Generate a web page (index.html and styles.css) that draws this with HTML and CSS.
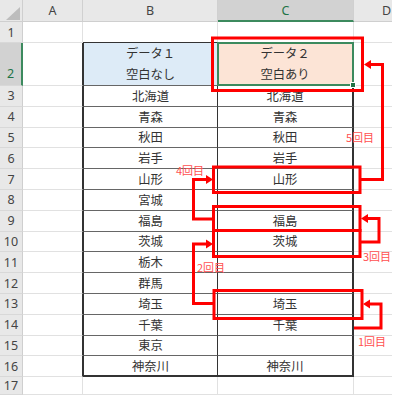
FILE: index.html
```html
<!DOCTYPE html>
<html lang="ja">
<head>
<meta charset="utf-8">
<title>Sheet</title>
<link rel="stylesheet" href="styles.css">
</head>
<body>
<div class="sheet">
  <div class="corner"><svg width="23" height="22" viewBox="0 0 23 22"><polygon points="20,7 20,20 6,20" fill="#BDBDBD"/></svg></div>
  <div class="ch">A</div><div class="ch">B</div><div class="ch chsel">C</div><div class="ch chd">D</div><div class="x"></div>

  <div class="rh">1</div><div class="c"></div><div class="c top"></div><div class="c top"></div><div class="c d"></div><div class="x"></div>

  <div class="rh rhsel">2</div><div class="c ta"></div><div class="c t tb h1">データ１<br>空白なし</div><div class="c t tc h2 selc">データ２<br>空白あり</div><div class="c d"></div><div class="x"></div>

  <div class="rh">3</div><div class="c ta"></div><div class="c t tb">北海道</div><div class="c t tc">北海道</div><div class="c d"></div><div class="x"></div>
  <div class="rh">4</div><div class="c ta"></div><div class="c t tb">青森</div><div class="c t tc">青森</div><div class="c d"></div><div class="x"></div>
  <div class="rh">5</div><div class="c ta"></div><div class="c t tb">秋田</div><div class="c t tc">秋田</div><div class="c d"></div><div class="x"></div>
  <div class="rh">6</div><div class="c ta"></div><div class="c t tb">岩手</div><div class="c t tc">岩手</div><div class="c d"></div><div class="x"></div>
  <div class="rh">7</div><div class="c ta"></div><div class="c t tb">山形</div><div class="c t tc">山形</div><div class="c d"></div><div class="x"></div>
  <div class="rh">8</div><div class="c ta"></div><div class="c t tb">宮城</div><div class="c t tc"></div><div class="c d"></div><div class="x"></div>
  <div class="rh">9</div><div class="c ta"></div><div class="c t tb">福島</div><div class="c t tc">福島</div><div class="c d"></div><div class="x"></div>
  <div class="rh">10</div><div class="c ta"></div><div class="c t tb">茨城</div><div class="c t tc">茨城</div><div class="c d"></div><div class="x"></div>
  <div class="rh">11</div><div class="c ta"></div><div class="c t tb">栃木</div><div class="c t tc"></div><div class="c d"></div><div class="x"></div>
  <div class="rh">12</div><div class="c ta"></div><div class="c t tb">群馬</div><div class="c t tc"></div><div class="c d"></div><div class="x"></div>
  <div class="rh">13</div><div class="c ta"></div><div class="c t tb">埼玉</div><div class="c t tc">埼玉</div><div class="c d"></div><div class="x"></div>
  <div class="rh">14</div><div class="c ta"></div><div class="c t tb">千葉</div><div class="c t tc">千葉</div><div class="c d"></div><div class="x"></div>
  <div class="rh">15</div><div class="c ta"></div><div class="c t tb">東京</div><div class="c t tc"></div><div class="c d"></div><div class="x"></div>
  <div class="rh">16</div><div class="c ta"></div><div class="c t tb tl">神奈川</div><div class="c t tc tl">神奈川</div><div class="c d"></div><div class="x"></div>

  <div class="rh">17</div><div class="c"></div><div class="c"></div><div class="c"></div><div class="c d"></div><div class="x"></div>
</div>

<svg class="overlay" width="418" height="395" viewBox="0 0 418 395">
  <g fill="none" stroke="#FF0000" stroke-width="3" stroke-linejoin="miter">
    <rect x="212.5" y="38" width="150" height="52.5"/>
    <rect x="213.5" y="167" width="146.5" height="25.5"/>
    <rect x="213.5" y="206.5" width="146.5" height="24"/>
    <rect x="213.5" y="230.5" width="146.5" height="26"/>
    <rect x="214" y="290.5" width="148" height="28"/>
    <path d="M354 328 H381 V304 H368"/>
    <path d="M361 179.5 H382.5 V64.5 H369"/>
    <path d="M360 242 H379 V218.5 H366"/>
    <path d="M213 219 H193.5 V179.5 H207"/>
    <path d="M214 303.5 H193.5 V244 H207"/>
  </g>
  <g fill="#FF0000">
    <polygon points="363,304 370,299.5 370,308.5"/>
    <polygon points="364,64.5 371,60 371,69"/>
    <polygon points="361,218.5 368,214 368,223"/>
    <polygon points="213,179.5 206,175 206,184"/>
    <polygon points="213,244 206,239.5 206,248.5"/>
  </g>
</svg>
<span class="lbl l1">1回目</span>
<span class="lbl l2">2回目</span>
<span class="lbl l3">3回目</span>
<span class="lbl l4">4回目</span>
<span class="lbl l5">5回目</span>
</body>
</html>
```
FILE: styles.css
```css
html, body {
  margin: 0;
  padding: 0;
  background: #ffffff;
}
body {
  position: relative;
  width: 418px;
  height: 395px;
  overflow: hidden;
}
.sheet {
  display: grid;
  grid-template-columns: 23px 60px 135px 136px 38px 1fr;
  grid-template-rows: 22px 21px 43px repeat(14, 20.8px) 1fr;
  width: 418px;
  height: 395px;
}
.sheet > div {
  box-sizing: border-box;
  min-width: 0;
  min-height: 0;
}
.corner {
  background: #E8E8E8;
  border-right: 1px solid #CFCFCF;
  border-bottom: 1px solid #CFCFCF;
}
.corner svg { display: block; }
.ch {
  background: #E8E8E8;
  border-right: 1px solid #D0D0D0;
  border-bottom: 1px solid #CFCFCF;
  display: flex;
  align-items: center;
  justify-content: center;
  font: 12.5px "Noto Sans", "Liberation Sans", sans-serif;
  color: #444;
}
.chsel {
  background: #D2D2D2;
  color: #217346;
  border-bottom: 2px solid #3C8A5E;
}
.chd {
  justify-content: flex-start;
  padding-left: 28px;
  border-right: none;
}
.x { background: #ffffff; }
.rh {
  background: #E8E8E8;
  border-right: 1px solid #CFCFCF;
  border-bottom: 1px solid #D8D8D8;
  display: flex;
  align-items: center;
  justify-content: center;
  font: 12.5px "Noto Sans", "Liberation Sans", sans-serif;
  color: #444;
}
.rhsel {
  background: #D2D2D2;
  color: #217346;
  border-right: 2px solid #3C8A5E;
  align-items: flex-end;
  padding-bottom: 3px;
}
.c {
  border-right: 1px solid #E1E1E1;
  border-bottom: 1px solid #E1E1E1;
  display: flex;
  align-items: center;
  justify-content: center;
  font: 12.3px "Noto Sans CJK JP", "Noto Sans", sans-serif;
  color: #333;
  white-space: nowrap;
}
.c.d { border-right: none; }
.ta { border-right-color: #333; }
.top { border-bottom-color: #333; }
.t { border-bottom-color: #666; }
.tb {
  border-left: 1px solid #333;
  border-right-color: #333;
}
.tc { border-right: 2px solid #333; }
.tl { border-bottom: 2px solid #333; }
.h1, .h2 {
  text-align: center;
  line-height: 21px;
}
.h1 { background: #DDEBF7; }
.h2 { background: #FCE4D6; }
.selc { position: relative; }
.selc::after {
  content: "";
  position: absolute;
  left: -1px;
  top: -1px;
  right: -2px;
  bottom: -1px;
  border: 2px solid #3C8A5E;
}
.selc::before {
  content: "";
  position: absolute;
  right: -4px;
  bottom: -3px;
  width: 4px;
  height: 4px;
  background: #217346;
  border: 1px solid #ffffff;
  z-index: 1;
}
.overlay {
  position: absolute;
  left: 0;
  top: 0;
  pointer-events: none;
}
.lbl {
  position: absolute;
  font: 11px/11px "Noto Sans CJK JP", "Noto Sans", sans-serif;
  color: #FF4F4F;
  white-space: nowrap;
}
.l1 { left: 358px; top: 336px; }
.l2 { left: 197px; top: 261.5px; }
.l3 { left: 363px; top: 250.5px; }
.l4 { left: 176px; top: 165px; }
.l5 { left: 346px; top: 131.5px; }
```
